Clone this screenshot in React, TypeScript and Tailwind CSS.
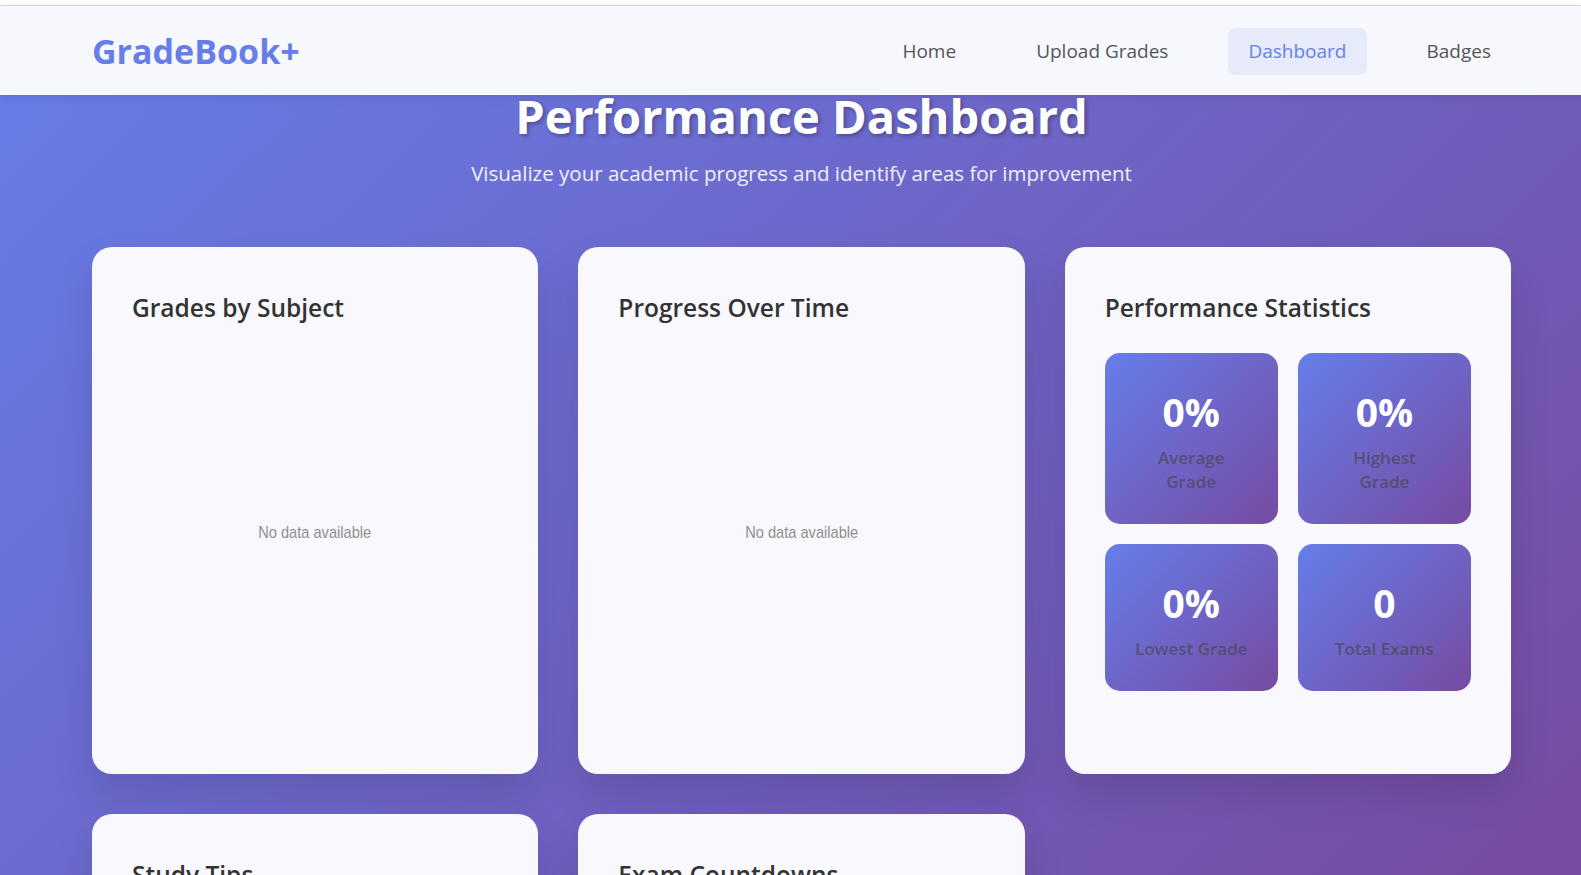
import React from "react";

const navLinks = ["Home", "Upload Grades", "Dashboard", "Badges"];

const stats = [
  { value: "0%", label: ["Average", "Grade"] },
  { value: "0%", label: ["Highest", "Grade"] },
  { value: "0%", label: ["Lowest Grade"] },
  { value: "0", label: ["Total Exams"] },
];

function ChartCard({ title }: { title: string }) {
  return (
    <div className="bg-[#f8f8fd] rounded-[20px] px-10 pt-10 shadow-[0_20px_40px_rgba(0,0,0,0.12)] h-[527px]">
      <h3 className="text-[24.5px] leading-[41px] font-[550] text-[#333]">{title}</h3>
      <div className="h-[410px] flex items-center justify-center">
        <span className="inline-block scale-x-[0.86] text-[17px] text-[#8f8f8f] font-['Liberation_Sans',Arial,sans-serif]">
          No data available
        </span>
      </div>
    </div>
  );
}

export default function App() {
  return (
    <div className="min-h-[875px] h-[875px] overflow-hidden bg-[linear-gradient(135deg,#667eea_0%,#764ba2_100%)] font-['Open_Sans',sans-serif]">
      <div className="h-[5px] bg-white border-b border-[#dcdcdc] box-content"></div>
      <nav className="bg-[#f7f8fd] h-[89px] shadow-[0_2px_10px_rgba(0,0,0,0.08)]">
        <div className="pl-[92px] pr-[70px] h-full flex items-center justify-between">
          <span className="text-[34px] font-bold text-[#667eea] mt-[2px]">GradeBook+</span>
          <div className="flex items-center gap-10 mt-[2px]">
            {navLinks.map((l) => (
              <span
                key={l}
                className={`px-5 py-2.5 rounded-lg text-[19px] leading-[27px] ${
                  l === "Dashboard" ? "bg-[#e7eaf8] text-[#667eea]" : "text-[#555]"
                }`}
              >
                {l}
              </span>
            ))}
          </div>
        </div>
      </nav>

      <main className="pl-[92px] pr-[70px]">
        <div className="text-center -mt-[7px]">
          <h1 className="text-[47px] leading-[56px] font-bold text-white [text-shadow:2px_2px_4px_rgba(0,0,0,0.3)]">
            Performance Dashboard
          </h1>
          <p className="mt-[15px] text-[20.5px] leading-[28px] text-white/90">
            Visualize your academic progress and identify areas for improvement
          </p>
        </div>

        <div className="grid grid-cols-3 gap-10 mt-[60px]">
          <ChartCard title="Grades by Subject" />
          <ChartCard title="Progress Over Time" />

          <div className="bg-[#f8f8fd] rounded-[20px] px-10 pt-10 shadow-[0_20px_40px_rgba(0,0,0,0.12)] h-[527px]">
            <h3 className="text-[24.5px] leading-[41px] font-[550] text-[#333] mb-[25px]">
              Performance Statistics
            </h3>
            <div className="grid grid-cols-2 gap-5">
              {stats.map((s, i) => (
                <div
                  key={i}
                  className="rounded-[15px] bg-[linear-gradient(135deg,#667eea_0%,#764ba2_100%)] py-[30px] px-3 text-center"
                >
                  <div className="text-[39px] leading-[58px] font-bold text-white">{s.value}</div>
                  <div className="mt-[5px] text-[17px] leading-[24px] font-semibold text-[rgba(70,70,80,0.68)] whitespace-nowrap">
                    {s.label.map((line) => (
                      <div key={line}>{line}</div>
                    ))}
                  </div>
                </div>
              ))}
            </div>
          </div>

          <div className="bg-[#f8f8fd] rounded-[20px] px-10 pt-10 shadow-[0_20px_40px_rgba(0,0,0,0.12)] h-[300px]">
            <h3 className="text-[24.5px] leading-[41px] font-[550] text-[#333]">Study Tips</h3>
          </div>
          <div className="bg-[#f8f8fd] rounded-[20px] px-10 pt-10 shadow-[0_20px_40px_rgba(0,0,0,0.12)] h-[300px]">
            <h3 className="text-[24.5px] leading-[41px] font-[550] text-[#333]">Exam Countdowns</h3>
          </div>
        </div>
      </main>
    </div>
  );
}
